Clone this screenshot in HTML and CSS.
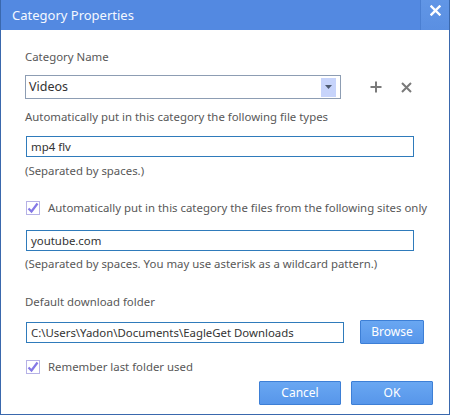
FILE: index.html
```html
<!DOCTYPE html>
<html>
<head>
<meta charset="utf-8">
<link rel="stylesheet" href="styles.css">
</head>
<body>
<div class="window">
  <div class="titlebar">
    <span class="title">Category Properties</span>
    <div class="close">
      <svg width="11" height="11" viewBox="0 0 11 11"><path d="M1.5 1.5 L9.5 9.5 M9.5 1.5 L1.5 9.5" stroke="#fff" stroke-width="2.4" stroke-linecap="square"/></svg>
    </div>
  </div>
  <div class="content">
    <div class="label l-name">Category Name</div>
    <div class="name-row">
      <div class="select">
        <span class="select-text">Videos</span>
        <span class="drop"><svg width="7" height="4" viewBox="0 0 7 4"><path d="M0 0 H7 L3.5 4 Z" fill="#4d5a70"/></svg></span>
      </div>
      <svg class="icon-btn plus" width="12" height="12" viewBox="0 0 12 12"><path d="M6 0.5 V11.5 M0.5 6 H11.5" stroke="#7a7a7a" stroke-width="2"/></svg>
      <svg class="icon-btn cross" width="11" height="11" viewBox="0 0 11 11"><path d="M1 1 L10 10 M10 1 L1 10" stroke="#7a7a7a" stroke-width="2"/></svg>
    </div>
    <div class="label l-types">Automatically put in this category the following file types</div>
    <div class="input in-types">mp4 flv</div>
    <div class="label note n1">(Separated by spaces.)</div>
    <div class="check-row cr1">
      <span class="checkbox"><svg width="12" height="12" viewBox="0 0 12 12"><path d="M1.5 6.5 L4.5 9.5 L10.5 1.5" fill="none" stroke="#8478e6" stroke-width="2.2"/></svg></span>
      <span class="label">Automatically put in this category the files from the following sites only</span>
    </div>
    <div class="input in-sites">youtube.com</div>
    <div class="label note n2">(Separated by spaces. You may use asterisk as a wildcard pattern.)</div>
    <div class="label l-folder">Default download folder</div>
    <div class="folder-row">
      <div class="input in-folder">C:\Users\Yadon\Documents\EagleGet Downloads</div>
      <button class="btn browse">Browse</button>
    </div>
    <div class="check-row cr2">
      <span class="checkbox"><svg width="12" height="12" viewBox="0 0 12 12"><path d="M1.5 6.5 L4.5 9.5 L10.5 1.5" fill="none" stroke="#8478e6" stroke-width="2.2"/></svg></span>
      <span class="label">Remember last folder used</span>
    </div>
    <div class="actions">
      <button class="btn action">Cancel</button>
      <button class="btn action">OK</button>
    </div>
  </div>
</div>
</body>
</html>
```
FILE: styles.css
```css
* { box-sizing: border-box; }
html, body { margin: 0; padding: 0; background: #fff; }
body { font-family: "Noto Sans", "Open Sans", sans-serif; font-size: 11.4px; line-height: 16px; color: #585858; }
.window { width: 450px; height: 415px; border: 1px solid #3a68ad; border-top: none; display: flex; flex-direction: column; overflow: hidden; }
.titlebar { height: 30px; background: #5389e1; display: flex; justify-content: space-between; align-items: flex-start; margin: 0 -1px; flex: none; }
.title { color: #f4f8ff; font-size: 13px; line-height: 18px; padding: 6px 0 0 12px; }
.close { width: 29px; height: 30px; background: linear-gradient(#6196e6, #5a8fe2); border-left: 1px solid #4a7fd2; display: flex; justify-content: center; padding-top: 5px; margin-right: 1px; }
.close svg { display: block; }
.content { padding: 19px 16px 0 24px; display: flex; flex-direction: column; flex: 1; }
.label { color: #585858; white-space: nowrap; }
.name-row { display: flex; align-items: center; margin-top: 10px; height: 24px; }
.select { width: 316px; height: 24px; border: 1px solid #8d9db3; display: flex; align-items: center; justify-content: space-between; padding: 0 4px 0 3px; }
.select-text { color: #333; font-size: 12.5px; }
.drop { width: 15px; height: 19px; background: #c7d4fb; display: flex; align-items: center; justify-content: center; }
.drop svg { display: block; }
.icon-btn { display: block; }
.plus { margin-left: 29px; }
.cross { margin-left: 19px; }
.l-types { margin-top: 10px; }
.input { height: 21px; border: 1px solid #2f7bbb; color: #333; padding: 1px 0 0 4px; line-height: 17px; white-space: nowrap; overflow: hidden; }
.in-types, .in-sites { width: 388px; margin-left: 1px; margin-top: 11px; }
.n1 { margin-top: 6px; }
.check-row { display: flex; align-items: center; height: 16px; }
.cr1 { margin-top: 21px; margin-left: 1px; }
.checkbox { width: 14px; height: 14px; border: 1px solid #b6b2e6; background: #fff; display: flex; align-items: center; justify-content: center; margin-right: 8px; flex: none; }
.checkbox svg { display: block; }
.in-sites { margin-top: 14px; height: 21px; }
.n2 { margin-top: 5px; }
.l-folder { margin-top: 22px; }
.folder-row { display: flex; align-items: center; margin-top: 10px; height: 24px; }
.in-folder { width: 318px; margin-left: 1px; }
.btn { font-family: inherit; font-size: 12px; color: #fff; background: linear-gradient(#69a7f2, #5796ea); border: 1px solid #3d7fd6; border-radius: 1px; padding: 0; height: 24px; line-height: 20px; }
.browse { width: 64px; margin-left: 16px; }
.cr2 { margin-top: 15px; margin-left: 1px; }
.actions { display: flex; justify-content: flex-end; gap: 10px; margin-top: 6px; }
.action { width: 82px; }
```
